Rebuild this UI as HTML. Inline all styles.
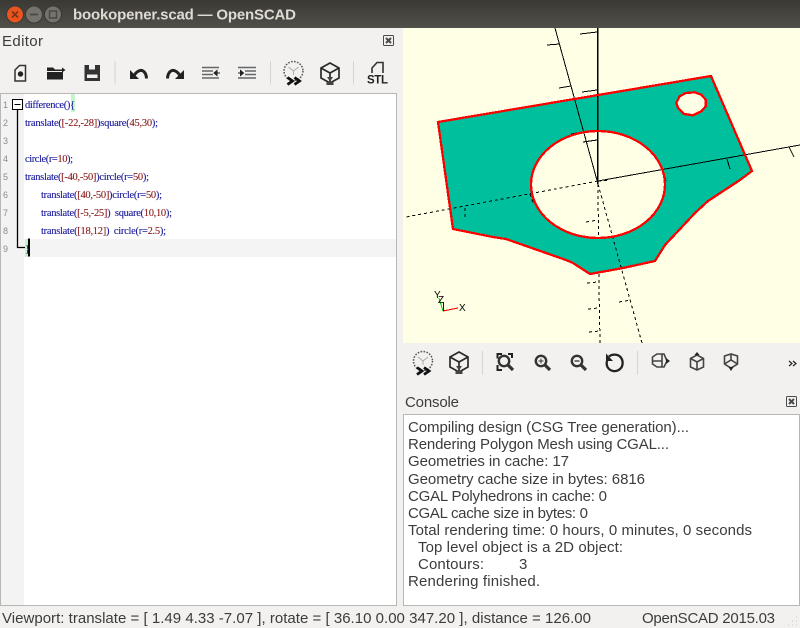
<!DOCTYPE html>
<html><head><meta charset="utf-8"><title>bookopener.scad — OpenSCAD</title>
<style>
html,body{margin:0;padding:0;background:#f2f1f0;overflow:hidden}
svg{display:block;width:800px;height:628px}
.u{font-family:"Liberation Sans",sans-serif;font-size:15px;fill:#3c3c3c}
.c{font-family:"Liberation Serif",serif;font-size:10.5px;fill:#1a1a9a;stroke:#1a1a9a;stroke-width:.12;white-space:pre}
.n{fill:#8b1a1a;stroke:#8b1a1a}
.ln{font-family:"Liberation Sans",sans-serif;font-size:9px;fill:#8a8a8a}
</style></head><body>
<svg xmlns="http://www.w3.org/2000/svg" width="800" height="628" viewBox="0 0 800 628">
<defs>
<linearGradient id="tb" x1="0" y1="0" x2="0" y2="1"><stop offset="0" stop-color="#3a3934"/><stop offset="1" stop-color="#514f49"/></linearGradient>
<g id="cube" fill="none" stroke="#2a2a2a" stroke-width="1.700">
<path d="M0-11 9-6V4L0 9-9 4V-6Z"/><path d="M-9-6 0-1 9-6M0-1V3"/>
<path d="M-3 3H3L1 6V8H3.500V11H-3.500V8H-1V6Z" fill="#444" stroke="none"/>
</g>
<g id="prev">
<circle cx="0" cy="0" r="9.500" fill="none" stroke="#555" stroke-width="1.500" stroke-dasharray="1.600 1.400"/>
<path d="M-5-4 0 0 5-4M0 0V4" fill="none" stroke="#aaa" stroke-width="1"/>
<path d="M-6 6.500-1 10-6 13.500M1 6.500 6 10 1 13.500" fill="none" stroke="#111" stroke-width="2.800"/>
</g>
<g id="mag" fill="none" stroke="#333">
<circle cx="-1.500" cy="-1.500" r="5.200" stroke-width="2.400"/><path d="M2.500 2.500 7.500 7.500" stroke-width="3.200"/>
</g>
</defs>

<rect width="800" height="628" fill="#f2f1f0"/>
<rect width="800" height="28" fill="url(#tb)"/>
<circle cx="15" cy="14.500" r="8.500" fill="#e9541f" stroke="#3a3934"/>
<path d="M12 11.500 18 17.500M18 11.500 12 17.500" stroke="#7a3318" stroke-width="1.600"/>
<circle cx="34" cy="14.500" r="8.500" fill="#75736c" stroke="#3a3934"/>
<path d="M30 14.500H38" stroke="#4a4944" stroke-width="1.800"/>
<circle cx="53" cy="14.500" r="8.500" fill="#75736c" stroke="#3a3934"/>
<rect x="49.500" y="11" width="7" height="7" fill="none" stroke="#4a4944" stroke-width="1.500"/>
<text x="73" y="19.500" textLength="223" style="font:bold 15px 'Liberation Sans',sans-serif;fill:#dfdbd2">bookopener.scad — OpenSCAD</text>

<text class="u" x="2" y="46" textLength="41">Editor</text>
<g fill="none" stroke="#4a4a4a"><rect x="383.500" y="35.500" width="10" height="10" rx="1"/><path d="M386 38 391 43M391 38 386 43" stroke-width="2"/></g>

<!-- editor toolbar -->
<path d="M15 70 19.500 65.500H25.500V81H15Z" fill="none" stroke="#333" stroke-width="1.500"/><circle cx="20.500" cy="74" r="2.700" fill="#222"/>
<path d="M47 67.500H53L55 69.500H58V71H47ZM47 72H63V79.500H47Z" fill="#222"/><path d="M57 69.500H62V67.500L65.500 70 62 72.500V71H57Z" fill="#222"/>
<path d="M84.500 65H89V69.500H95V65H100V81H84.500Z" fill="#333"/><rect x="87" y="74.500" width="10.500" height="3.500" fill="#f2f1f0"/>
<path d="M115 61V84.500M270.500 61V84.500M353.500 61V84.500" stroke="#d6d4d0"/>
<path d="M134 76C136 71.500 140 70 142 70.500 145 71.500 146.500 75 146.500 78.500" fill="none" stroke="#222" stroke-width="3"/><path d="M130 70V79H139Z" fill="#222"/>
<path d="M180 76C178 71.500 174 70 172 70.500 169 71.500 167.500 75 167.500 78.500" fill="none" stroke="#222" stroke-width="3"/><path d="M184 70V79H175Z" fill="#222"/>
<g stroke="#666" stroke-width="1.500" fill="none">
<path d="M202 67.500H219M202 71H213M202 74.500H213M202 78H219"/>
<path d="M238 67.500H256M245 71H256M245 74.500H256M238 78H256"/>
</g>
<path d="M214 73H220M214 73 217 70.500V75.500Z" fill="#222" stroke="#222"/>
<path d="M238 73H243M243.500 73 240.500 70.500V75.500Z" fill="#222" stroke="#222"/>
<use href="#prev" x="293.500" y="71"/>
<use href="#cube" x="330" y="74"/>
<path d="M372 73V68L377 62.500H383V73" fill="none" stroke="#333" stroke-width="1.600"/>
<text x="367" y="83.500" textLength="21" style="font:bold 11.500px 'Liberation Sans',sans-serif;fill:#222">STL</text>

<!-- editor frame -->
<rect x="0.500" y="93.500" width="396" height="512" fill="#fff" stroke="#b9b7b3"/>
<rect x="1" y="94" width="23" height="511" fill="#f3f3f3"/>
<rect x="24" y="239" width="372" height="18" fill="#f4f4f4"/>
<rect x="71" y="94" width="4" height="18" fill="#c5f3cc"/>
<rect x="25" y="239" width="3" height="18" fill="#c5f3cc"/>
<rect x="28" y="238.500" width="2" height="18" fill="#000"/>
<text class="ln" x="3" y="108">1</text><text class="ln" x="3" y="126">2</text><text class="ln" x="3" y="144">3</text><text class="ln" x="3" y="162">4</text><text class="ln" x="3" y="180">5</text><text class="ln" x="3" y="198">6</text><text class="ln" x="3" y="216">7</text><text class="ln" x="3" y="234">8</text><text class="ln" x="3" y="252">9</text>
<rect x="12.500" y="99.500" width="10" height="10" fill="#fff" stroke="#000"/>
<path d="M14.500 104.500H20.500" fill="none" stroke="#000"/>
<path d="M17.500 110V247.500H25" fill="none" stroke="#000" stroke-width="1.300"/>
<text class="c" x="25" y="108" textLength="50">difference(){</text>
<text class="c" x="25" y="126" textLength="133">translate(<tspan class="n">[-22,-28]</tspan>)square(<tspan class="n">45,30</tspan>);</text>
<text class="c" x="25" y="162" textLength="48">circle(r=<tspan class="n">10</tspan>);</text>
<text class="c" x="25" y="180" textLength="124">translate(<tspan class="n">[-40,-50]</tspan>)circle(r=<tspan class="n">50</tspan>);</text>
<text class="c" x="41" y="198" textLength="121">translate(<tspan class="n">[40,-50]</tspan>)circle(r=<tspan class="n">50</tspan>);</text>
<text class="c" x="41" y="216" textLength="131">translate(<tspan class="n">[-5,-25]</tspan>)  square(<tspan class="n">10,10</tspan>);</text>
<text class="c" x="41" y="234" textLength="125">translate(<tspan class="n">[18,12]</tspan>)  circle(r=<tspan class="n">2.5</tspan>);</text>
<text class="c" x="25" y="252">}</text>

<!-- viewport -->
<rect x="403" y="28" width="397" height="315" fill="#ffffe5"/>
<path fill="#00bf9c" d="M438 122 711 76 752 171 740 180 708 201 695 213 665 245 655 261 623 268 590 274 573 263 566 260 506 239 493 237 453 229Z"/>
<ellipse cx="598" cy="184.500" rx="67" ry="53.500" fill="#ffffe5"/>
<path fill="#ffffe5" d="M676.300 103 679.700 96.300 685.700 93 694.700 92.300 701.300 94.700 705.700 99.700 705.700 106.300 701.300 111.300 693 115.300 684 114 678 108Z"/>
<g stroke="#000" fill="none" shape-rendering="crispEdges">
<path d="M555 28 598 184M800 145 598 181"/>
<path d="M597.500 28V184" stroke-width="1.500"/>
<path d="M580 34 597 32M547 45 560 44M559 88 571 86M582 92 597 90M571 134 583 132M583 142 597 140M727 159 730 169M789 147 794 157M663 170 666 181"/>
<g stroke-dasharray="3 3">
<path d="M598 184 598.500 238M598.800 274 600 343M598 184 642 343M598 181 406 217"/>
<path d="M586 222 598 220M587 283 598 282M588 309 598 308M589 332 600 331M619 302 631 300M465 208 465 219M530 194 534 205M598 181 610 180"/>
</g>
</g>
<g fill="none" stroke="#f00" stroke-width="2.300" shape-rendering="crispEdges">
<path d="M438 122 711 76 752 171 740 180 708 201 695 213 665 245 655 261 623 268 590 274 573 263 566 260 506 239 493 237 453 229Z"/>
<ellipse cx="598" cy="184.500" rx="67" ry="53.500"/>
<path d="M676.300 103 679.700 96.300 685.700 93 694.700 92.300 701.300 94.700 705.700 99.700 705.700 106.300 701.300 111.300 693 115.300 684 114 678 108Z"/>
</g>
<g fill="none" shape-rendering="crispEdges">
<path d="M443 311 458 308" stroke="#f00"/><path d="M443 311 439 298" stroke="#0c0"/><path d="M443.500 311V302" stroke="#00c"/>
</g>
<g style="font:10px 'Liberation Sans',sans-serif;fill:#000">
<text x="459" y="311">X</text><text x="438" y="303">Z</text><text x="434" y="298">Y</text>
</g>

<!-- view toolbar -->
<use href="#prev" x="423" y="361"/>
<use href="#cube" x="459" y="363"/>
<path d="M482.500 351V375M637.500 351V375" stroke="#d6d4d0"/>
<path d="M497.500 358.500V354H502M508 354H512V358M497.500 365V370H502" fill="none" stroke="#222" stroke-width="2"/>
<use href="#mag" x="505.500" y="362.500"/>
<use href="#mag" x="542.500" y="362.500"/><path d="M538.500 361H543.500M541 358.500V363.500" stroke="#333"/>
<use href="#mag" x="578.500" y="362.500"/><path d="M574.500 361H579.500" stroke="#333" stroke-width="1.300"/>
<path d="M609 356.500C612 354 617 354 620 356.500 623.500 360 623.500 366 620 369 616 372.500 610 371.500 607.500 367 606.500 365 606.500 363 607 361" fill="none" stroke="#222" stroke-width="2.300"/>
<path d="M606 353.500V361H613Z" fill="#222"/>
<g fill="none" stroke="#444" stroke-width="1.600">
<path d="M652.500 357 657 354 664 354 667 361 664 367 657 367 652.500 364ZM652.500 361H662M662 354V367"/>
<path d="M690.500 358.500 697 355 703.500 358.500V367L697 370 690.500 367ZM690.500 358.500 697 362 703.500 358.500M697 362V370"/>
<path d="M724.500 356 731 354 737.500 356V364L731 368 724.500 364ZM724.500 364 731 360 737.500 364M731 354V360"/>
</g>
<path d="M666 358 670 361 666 364Z" fill="#222"/><path d="M694.500 355 697 352 699.500 355Z" fill="#222"/><path d="M728.500 367H733.500L731 371Z" fill="#222"/>
<path d="M789 361 792 363.500 789 366M793 361 796 363.500 793 366" fill="none" stroke="#222" stroke-width="1.200"/>

<text class="u" x="405" y="407" textLength="54">Console</text>
<g fill="none" stroke="#4a4a4a"><rect x="786.500" y="396.500" width="10" height="10" rx="1"/><path d="M789 399 794 404M794 399 789 404" stroke-width="2"/></g>

<rect x="403.500" y="414.500" width="396" height="191" fill="#fff" stroke="#b9b7b3"/>
<text class="u" x="408" y="432" textLength="281">Compiling design (CSG Tree generation)...</text>
<text class="u" x="408" y="449" textLength="261">Rendering Polygon Mesh using CGAL...</text>
<text class="u" x="408" y="466" textLength="161">Geometries in cache: 17</text>
<text class="u" x="408" y="484" textLength="237">Geometry cache size in bytes: 6816</text>
<text class="u" x="408" y="501" textLength="199">CGAL Polyhedrons in cache: 0</text>
<text class="u" x="408" y="518" textLength="180">CGAL cache size in bytes: 0</text>
<text class="u" x="408" y="535" textLength="344">Total rendering time: 0 hours, 0 minutes, 0 seconds</text>
<text class="u" x="418" y="552" textLength="205">Top level object is a 2D object:</text>
<text class="u" x="418" y="569" textLength="66">Contours:</text>
<text class="u" x="519" y="569">3</text>
<text class="u" x="408" y="586" textLength="132">Rendering finished.</text>

<text class="u" x="2" y="623" textLength="589">Viewport: translate = [ 1.49 4.33 -7.07 ], rotate = [ 36.10 0.00 347.20 ], distance = 126.00</text>
<text class="u" x="642" y="623" textLength="133">OpenSCAD 2015.03</text>
<path d="M796 617h1M792 621h1M796 621h1M788 625h1M792 625h1M796 625h1" stroke="#c8c6c2"/>
</svg>
</body></html>
